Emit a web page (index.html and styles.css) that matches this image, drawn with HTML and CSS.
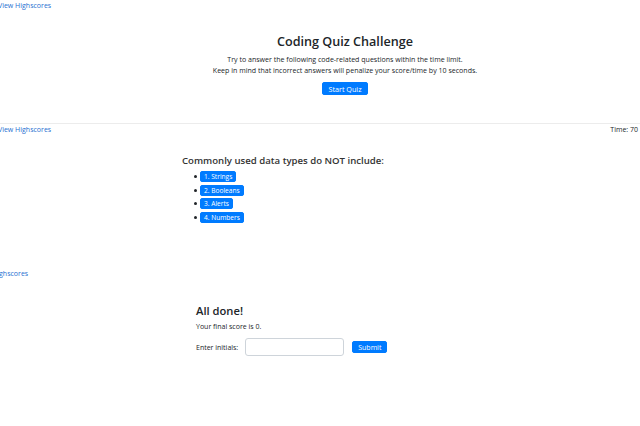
FILE: index.html
```html
<!DOCTYPE html>
<html>
<head>
<meta charset="utf-8">
<link rel="stylesheet" href="styles.css">
</head>
<body>
<section class="panel p1">
  <header class="bar"><a class="link shift1" href="#">View Highscores</a></header>
  <div class="hero">
    <h1 class="title">Coding Quiz Challenge</h1>
    <p class="lead">Try to answer the following code-related questions within the time limit.<br>Keep in mind that incorrect answers will penalize your score/time by 10 seconds.</p>
    <button class="btn btn-start">Start Quiz</button>
  </div>
</section>
<section class="panel p2">
  <header class="bar"><a class="link shift1" href="#">View Highscores</a><span class="timer">Time: 70</span></header>
  <div class="quiz">
    <h2 class="question">Commonly used data types do NOT include:</h2>
    <ul class="answers">
      <li><button class="btn btn-ans">1. Strings</button></li>
      <li><button class="btn btn-ans">2. Booleans</button></li>
      <li><button class="btn btn-ans">3. Alerts</button></li>
      <li><button class="btn btn-ans">4. Numbers</button></li>
    </ul>
  </div>
</section>
<section class="panel p3">
  <header class="bar"><a class="link shift3" href="#">View Highscores</a></header>
  <div class="done">
    <h2 class="done-title">All done!</h2>
    <p class="score">Your final score is 0.</p>
    <form class="form">
      <label class="label">Enter initials:</label>
      <input class="input" type="text">
      <button class="btn btn-submit" type="button">Submit</button>
    </form>
  </div>
</section>
</body>
</html>
```
FILE: styles.css
```css
* { box-sizing: border-box; }
html, body { margin: 0; padding: 0; background: #fff; }
body {
  font-family: "Open Sans", "Noto Sans", sans-serif;
  color: #212529;
  width: 640px;
  height: 426px;
  overflow: hidden;
}
.panel { display: flex; flex-direction: column; overflow: hidden; }
.p1 { height: 123px; }
.p2 { height: 142px; border-top: 1px solid #ececec; }
.p3 { flex: 1; }
.bar {
  display: flex;
  justify-content: space-between;
  align-items: center;
  height: 12px;
  font-size: 7px;
  line-height: 12px;
}
.p3 .bar { margin-top: 3px; }
.link { color: #1f6fd1; text-decoration: none; white-space: nowrap; }
.shift1 { margin-left: -2px; }
.shift3 { margin-left: -25px; }
.timer { margin-right: 2px; color: #212529; }
.hero {
  padding-left: 50px;
  text-align: center;
  padding-top: 22px;
  font-size: 7px;
  line-height: 10px;
}
.title {
  margin: 0;
  font-size: 12.6px;
  font-weight: 600;
  line-height: 16px;
}
.lead {
  margin: 4px 0 6px;
  font-size: 7.05px;
  line-height: 11px;
}
.btn {
  font-family: inherit;
  background: #007bff;
  color: #fff;
  border: 1px solid #007bff;
  border-radius: 2px;
  cursor: pointer;
}
.btn-start {
  display: inline-block;
  font-size: 7.2px;
  height: 13px;
  line-height: 10px;
  padding: 0 5px;
  vertical-align: top;
}
.quiz { padding-left: 182px; padding-top: 18px; }
.question {
  margin: 0;
  font-size: 9.6px;
  font-weight: 600;
  line-height: 14px;
  color: #333;
}
.answers {
  margin: 2px 0 0;
  padding-left: 12px;
  list-style: none;
}
.answers li {
  display: flex;
  align-items: center;
  height: 13.5px;
}
.answers li::before {
  content: "";
  width: 3px;
  height: 3px;
  border-radius: 50%;
  background: #212529;
  margin-right: 3px;
  flex: none;
}
.btn-ans {
  font-size: 6.6px;
  height: 11px;
  line-height: 9px;
  padding: 0 3px;
}
.done { padding-left: 196px; padding-top: 23px; }
.done-title {
  margin: 0;
  font-size: 11.2px;
  font-weight: 600;
  line-height: 16px;
}
.score { margin: 3px 0 0; font-size: 7px; line-height: 10px; }
.form { display: flex; align-items: center; margin-top: 6px; }
.label { font-size: 7px; margin-right: 7px; }
.input {
  width: 99px;
  height: 18px;
  border: 1px solid #ced4da;
  border-radius: 3px;
  margin-right: 8px;
}
.btn-submit {
  font-size: 7px;
  height: 12px;
  line-height: 9px;
  padding: 0 5px;
}
```
